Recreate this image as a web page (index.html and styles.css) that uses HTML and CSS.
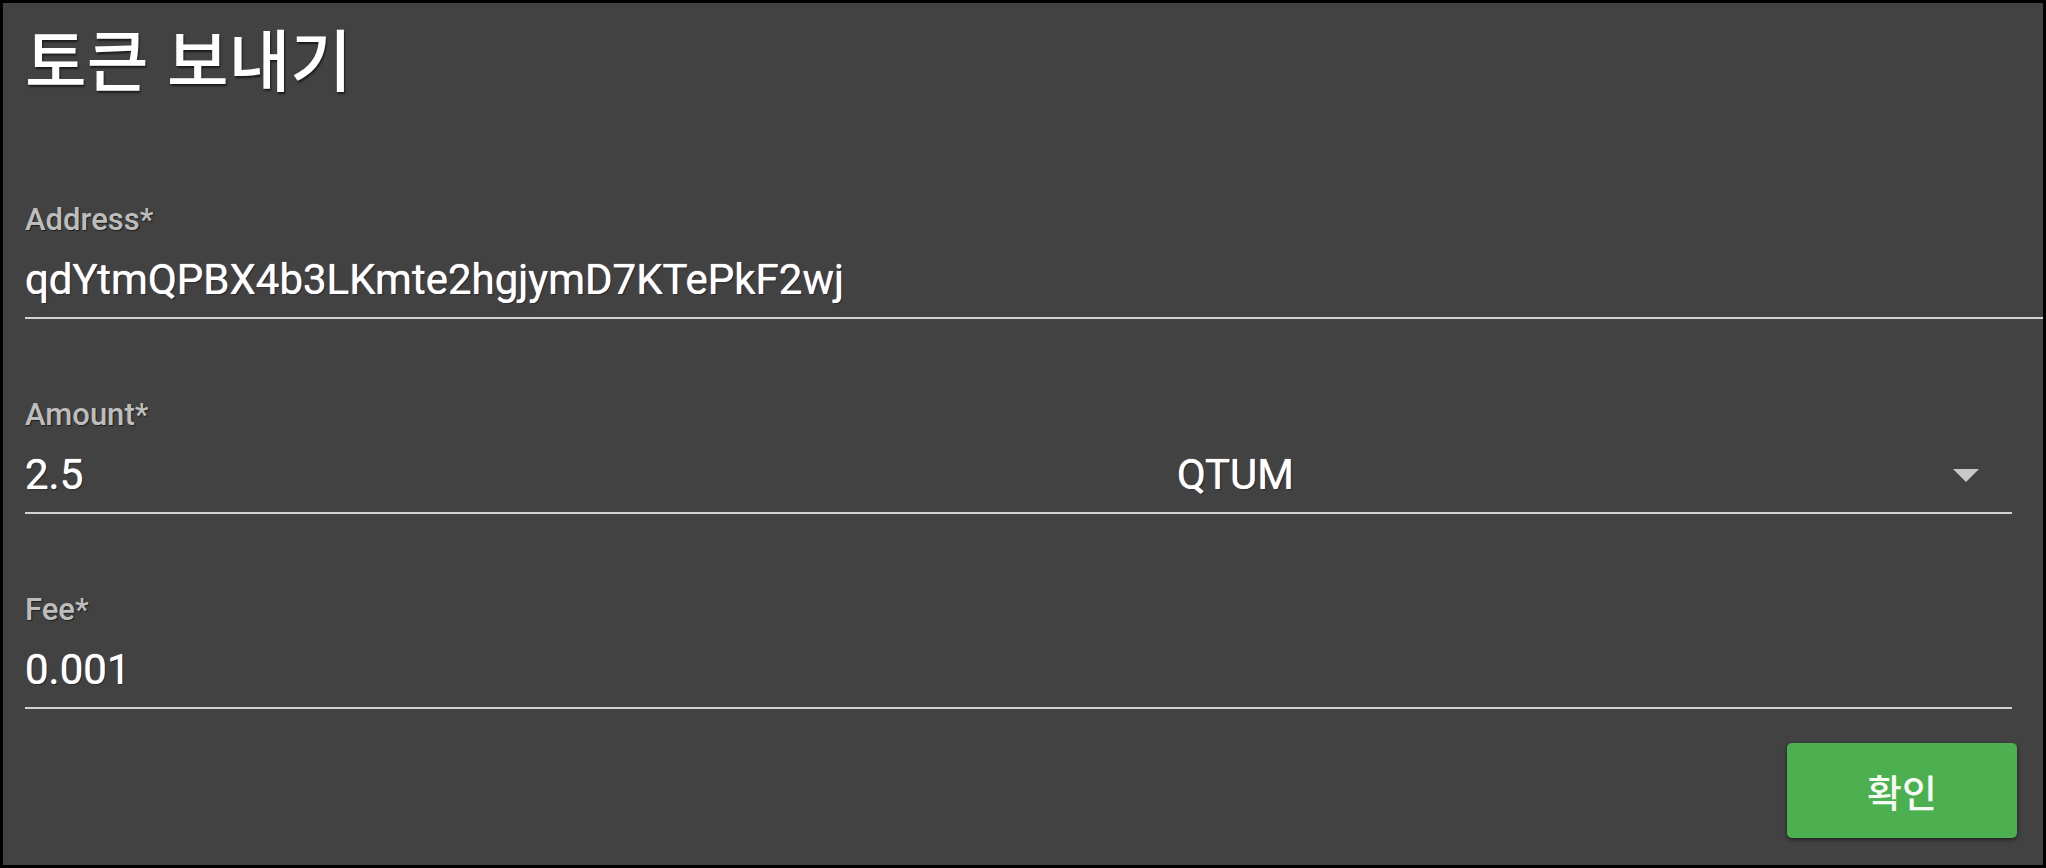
FILE: index.html
```html
<!DOCTYPE html>
<html lang="ko">
<head>
<meta charset="utf-8">
<title>토큰 보내기</title>
<link rel="stylesheet" href="styles.css">
</head>
<body>
<div class="panel">
  <h1 class="title">토큰 보내기</h1>
  <div class="field field-wide">
    <div class="label">Address*</div>
    <div class="value">qdYtmQPBX4b3LKmte2hgjymD7KTePkF2wj</div>
  </div>
  <div class="field">
    <div class="label">Amount*</div>
    <div class="row">
      <div class="value amount">2.5</div>
      <div class="value select">
        <span>QTUM</span>
        <svg class="caret" width="26" height="13" viewBox="0 0 26 13"><path d="M0 0 L26 0 L13 13 Z" fill="#c8c8c8"/></svg>
      </div>
    </div>
  </div>
  <div class="field">
    <div class="label">Fee*</div>
    <div class="value">0.001</div>
  </div>
  <div class="actions">
    <button class="btn">확인</button>
  </div>
</div>
</body>
</html>
```
FILE: styles.css
```css
html, body {
  margin: 0;
  padding: 0;
  background: #000;
}

.panel {
  box-sizing: border-box;
  width: 2046px;
  height: 868px;
  border: 3px solid #000;
  background: #424242;
  padding: 20px 0 0 22px;
  display: flex;
  flex-direction: column;
  font-family: Roboto, "Noto Sans", sans-serif;
}

.title {
  margin: 0;
  font-family: "Noto Sans CJK KR", "Noto Sans", sans-serif;
  font-size: 67px;
  line-height: 68px;
  font-weight: 500;
  color: #ffffff;
  text-shadow: 1px 2px 2px rgba(0, 0, 0, 0.6);
}

.field {
  margin-top: 80px;
  margin-right: 31px;
  border-bottom: 2px solid #d2d2d2;
  padding-bottom: 16px;
}

.field-wide {
  margin-top: 113px;
  margin-right: 0;
}

.label {
  font-size: 31px;
  line-height: 31px;
  font-weight: 500;
  color: #bdbdbd;
  text-shadow: 1px 1px 1px rgba(0, 0, 0, 0.55);
}

.value {
  margin-top: 24px;
  font-size: 42px;
  line-height: 42px;
  color: #ffffff;
  text-shadow: 0 0 1px #fff, 1px 1px 1px rgba(0, 0, 0, 0.6);
}

.row {
  display: flex;
  align-items: flex-end;
}

.amount {
  flex: 0 0 1152px;
}

.select {
  flex: 1;
  display: flex;
  align-items: center;
  justify-content: space-between;
  padding-right: 33px;
}

.caret {
  display: block;
}

.actions {
  display: flex;
  justify-content: flex-end;
  padding-right: 26px;
  margin-top: 34px;
}

.btn {
  width: 230px;
  height: 95px;
  border: none;
  border-radius: 5px;
  background: #4caf50;
  color: #f4fbf2;
  font-family: "Noto Sans CJK KR", "Noto Sans", sans-serif;
  font-size: 38px;
  font-weight: 500;
  box-shadow: 0 2px 4px rgba(0, 0, 0, 0.45);
  cursor: pointer;
}
```
